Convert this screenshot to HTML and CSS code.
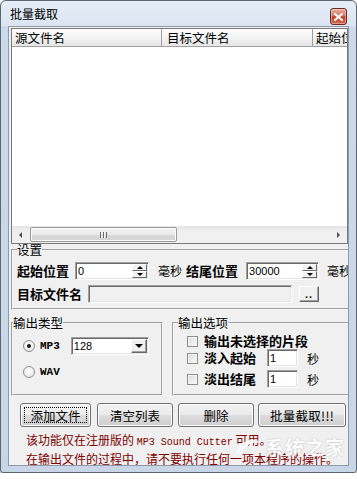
FILE: index.html
```html
<!DOCTYPE html>
<html lang="zh-CN">
<head>
  <meta charset="UTF-8" />
  <title>批量截取</title>
  <link rel="stylesheet" href="styles.css">
</head>
<body>
  <div class="window">
    <div class="titlebar">
      <span class="title">批量截取</span>
      <span class="close-btn">
        <svg width="9" height="8" viewBox="0 0 9 8"><path d="M1 1 L8 7 M8 1 L1 7" stroke="#fff" stroke-width="2" stroke-linecap="square"/></svg>
      </span>
    </div>

    <div class="client">
      <!-- file list -->
      <div class="listview">
        <div class="lv-header">
          <div class="lv-col col-src">源文件名</div>
          <div class="lv-col col-dst">目标文件名</div>
          <div class="lv-col col-start">起始位置</div>
        </div>
        <div class="lv-body"></div>
        <div class="hscroll">
          <div class="sb-btn"><span class="tri-left"></span></div>
          <div class="sb-track">
            <div class="sb-thumb"><span class="grip"></span></div>
          </div>
          <div class="sb-btn"><span class="tri-right"></span></div>
        </div>
      </div>

      <!-- settings -->
      <fieldset class="group settings">
        <legend>设置</legend>
        <div class="row">
          <span class="lbl">起始位置</span>
          <div class="spin sunken start-spin">
            <span class="field-val">0</span>
            <span class="spin-btns"><span class="spin-up"></span><span class="spin-down"></span></span>
          </div>
          <span class="unit ms">毫秒</span>
          <span class="lbl lbl-end">结尾位置</span>
          <div class="spin sunken end-spin">
            <span class="field-val">30000</span>
            <span class="spin-btns"><span class="spin-up"></span><span class="spin-down"></span></span>
          </div>
          <span class="unit ms2">毫秒</span>
        </div>
        <div class="row">
          <span class="lbl">目标文件名</span>
          <div class="sunken disabled target"></div>
          <div class="raised browse">..</div>
        </div>
      </fieldset>

      <div class="output-row">
        <fieldset class="group out-type">
          <legend>输出类型</legend>
          <div class="opt-row">
            <span class="radio checked"></span>
            <span class="fmt">MP3</span>
            <div class="combo sunken">
              <span class="field-val">128</span>
              <span class="drop raised"><i></i></span>
            </div>
          </div>
          <div class="opt-row wav">
            <span class="radio"></span>
            <span class="fmt">WAV</span>
          </div>
        </fieldset>

        <fieldset class="group out-opts">
          <legend>输出选项</legend>
          <div class="chk-row first">
            <span class="check"></span><span class="lbl">输出未选择的片段</span>
          </div>
          <div class="chk-row second">
            <span class="check"></span><span class="lbl">淡入起始</span>
            <div class="sunken num"><span class="field-val">1</span></div>
            <span class="unit sec">秒</span>
          </div>
          <div class="chk-row third">
            <span class="check"></span><span class="lbl">淡出结尾</span>
            <div class="sunken num"><span class="field-val">1</span></div>
            <span class="unit sec">秒</span>
          </div>
        </fieldset>
      </div>

      <div class="buttons">
        <div class="btn btn-add focused">添加文件</div>
        <div class="btn btn-clear">清空列表</div>
        <div class="btn btn-del">删除</div>
        <div class="btn btn-run">批量截取!!!</div>
      </div>

      <div class="notice">
        <div>该功能仅在注册版的 <span class="mono">MP3 Sound Cutter</span> 可用。</div>
        <div>在输出文件的过程中，请不要执行任何一项本程序的操作。</div>
      </div>
    </div>

    <!-- site watermark over the dialog -->
    <div class="watermark">
      <svg width="30" height="24" viewBox="0 0 30 24"><path d="M3 18 C8 4, 22 2, 28 8 C20 6, 12 9, 7 20 Z" fill="#fff"/></svg>
      <span>系统之家</span>
    </div>
  </div>
</body>
</html>
```

FILE: styles.css
```css
* {
  box-sizing: border-box;
}
body {
  margin: 0;
  background: #fff;
  font-family: "Noto Sans CJK SC", sans-serif;
  font-size: 12px;
  color: #000;
}
/* Window frame */
.window {
  position: relative;
  width: 357px;
  height: 473px;
  padding: 0 7px 6px;
  border: 1px solid #5b6673;
  border-radius: 6px 6px 3px 3px;
  background: linear-gradient(#e6edf6, #dbe5f1 25px, #cbd9ea 26px, #c8d6e8);
  box-shadow: 0 2px 5px rgba(0, 0, 0, 0.5);
  display: flex;
  flex-direction: column;
}
.titlebar {
  height: 25px;
  display: flex;
  align-items: flex-start;
}
.title {
  margin: 5px 0 0 2px;
  font-size: 12px;
  line-height: 16px;
}
.close-btn {
  margin: 7px 2px 0 auto;
  width: 17px;
  height: 17px;
  border: 1px solid #6d2a22;
  border-radius: 3px;
  background: linear-gradient(#eab0a3, #d9735f 45%, #c4432c 52%, #d16a52);
  box-shadow: inset 0 0 0 1px rgba(255, 255, 255, 0.35);
  display: flex;
  align-items: center;
  justify-content: center;
}
.client {
  height: 440px;
  border: 1px solid #8e9aab;
  background: #f0f0f0;
  padding: 1px 0 0 2px;
  overflow: hidden;
}
/* List view */
.listview {
  width: 337px;
  height: 216px;
  border: 1px solid #7a7a7a;
  background: #fff;
  display: flex;
  flex-direction: column;
}
.lv-header {
  display: flex;
  height: 18px;
  border-bottom: 1px solid #a0a0a0;
  background: linear-gradient(#fdfdfd, #f1f1f1 60%, #e6e6e6);
}
.lv-col {
  border-right: 1px solid #a0a0a0;
  padding-left: 3px;
  font-size: 12.5px;
  line-height: 17px;
  white-space: nowrap;
  overflow: hidden;
}
.col-src {
  width: 150px;
}
.col-dst {
  width: 151px;
  padding-left: 5px;
}
.col-start {
  flex: 1;
  border-right: 0;
}
.lv-body {
  flex: 1;
}
.hscroll {
  height: 17px;
  display: flex;
  background: linear-gradient(#e4e4e4, #efefef 30%, #f0f0f0);
}
.sb-btn {
  width: 17px;
  display: flex;
  align-items: center;
  justify-content: center;
}
.tri-left {
  border-top: 3px solid transparent;
  border-bottom: 3px solid transparent;
  border-right: 3px solid #505050;
}
.tri-right {
  border-top: 3px solid transparent;
  border-bottom: 3px solid transparent;
  border-left: 3px solid #505050;
}
.sb-track {
  flex: 1;
  padding: 1px 0 1px 1px;
}
.sb-thumb {
  width: 147px;
  height: 100%;
  border: 1px solid #9a9a9a;
  border-radius: 2px;
  background: linear-gradient(#f5f5f5, #e8e8e8 50%, #d9d9d9 51%, #d3d3d3);
  box-shadow: inset 0 0 0 1px #fbfbfb;
  display: flex;
  align-items: center;
  justify-content: center;
}
.grip {
  width: 7px;
  height: 6px;
  background: repeating-linear-gradient(90deg, #6a6a6a 0 1px, #f4f4f4 1px 2px, transparent 2px 3px);
}
/* Group boxes */
.group {
  margin: 0;
  padding: 0;
  border: 2px groove #f4f4f4;
  min-width: 0;
  flex-shrink: 0;
}
.group legend {
  padding: 0;
  font-size: 12.5px;
  line-height: 14px;
}
.settings {
  width: 345px;
  padding: 5px 0 5px 4px;
}
.settings legend {
  line-height: 12px;
}
.row {
  display: flex;
  align-items: center;
  height: 19px;
}
.row + .row {
  margin-top: 4px;
}
.lbl {
  font-weight: bold;
  font-size: 13px;
  line-height: 16px;
  white-space: nowrap;
}
.unit {
  font-size: 12px;
  white-space: nowrap;
}
/* Classic 3D borders */
.sunken {
  background: #fff;
  border: 1px solid;
  border-color: #a0a0a0 #fff #fff #a0a0a0;
  box-shadow: inset 1px 1px 0 #696969, inset -1px -1px 0 #e3e3e3;
  padding: 1px;
}
.raised {
  background: #f0f0f0;
  border: 1px solid;
  border-color: #fff #696969 #696969 #fff;
  box-shadow: inset -1px -1px 0 #a0a0a0;
}
.field-val {
  flex: 1;
  padding-left: 1px;
  font-family: "Liberation Sans", sans-serif;
  font-size: 11px;
  line-height: 14px;
}
.spin {
  display: flex;
  height: 18px;
}
.start-spin {
  width: 74px;
  margin-left: 6px;
}
.end-spin {
  width: 73px;
  margin-left: 8px;
}
.spin-btns {
  width: 15px;
  display: flex;
  flex-direction: column;
}
.spin-btns span {
  flex: 1;
  background: #f0f0f0;
  border: 1px solid;
  border-color: #fff #696969 #696969 #fff;
  display: flex;
  align-items: center;
  justify-content: center;
}
.spin-up::before {
  content: "";
  border-left: 3px solid transparent;
  border-right: 3px solid transparent;
  border-bottom: 3px solid #000;
}
.spin-down::before {
  content: "";
  border-left: 3px solid transparent;
  border-right: 3px solid transparent;
  border-top: 3px solid #000;
}
.ms {
  margin-left: 9px;
}
.lbl-end {
  margin-left: 4px;
}
.ms2 {
  margin-left: 8px;
}
.target {
  width: 204px;
  height: 18px;
  margin-left: 6px;
}
.disabled {
  background: #f0f0f0;
}
.browse {
  width: 20px;
  height: 16px;
  margin-left: 7px;
  font-family: "Liberation Sans", sans-serif;
  font-size: 11px;
  font-weight: bold;
  line-height: 14px;
  text-align: center;
  letter-spacing: 1px;
}
/* Output options */
.output-row {
  display: flex;
  margin-top: 6px;
  height: 80px;
}
.out-type {
  width: 152px;
  padding: 7px 0 0 10px;
}
.out-type legend {
  margin-left: -10px;
}
.out-opts {
  width: 185px;
  margin-left: 9px;
  padding: 4px 0 0 13px;
}
.out-opts legend {
  margin-left: -9px;
}
.opt-row {
  display: flex;
  align-items: center;
  height: 18px;
}
.opt-row.wav {
  margin-top: 8px;
}
.radio {
  position: relative;
  width: 12px;
  height: 12px;
  border-radius: 50%;
  border: 1px solid #8e8f8f;
  background: radial-gradient(circle at 50% 40%, #fff, #e2e2e2);
}
.radio.checked::after {
  content: "";
  position: absolute;
  left: 3px;
  top: 3px;
  width: 4px;
  height: 4px;
  border-radius: 50%;
  background: #1a1a1a;
}
.fmt {
  margin-left: 5px;
  font-family: "Liberation Mono", monospace;
  font-size: 11px;
  font-weight: bold;
}
.combo {
  display: flex;
  width: 78px;
  height: 18px;
  margin-left: 11px;
}
.drop {
  width: 16px;
  display: flex;
  align-items: center;
  justify-content: center;
}
.drop i {
  border-left: 4px solid transparent;
  border-right: 4px solid transparent;
  border-top: 4px solid #000;
}
.chk-row {
  display: flex;
  align-items: center;
  height: 18px;
}
.chk-row.first {
  height: 14px;
}
.chk-row.second {
  margin-top: 1px;
}
.chk-row.third {
  margin-top: 3px;
}
.check {
  width: 11px;
  height: 11px;
  margin-right: 6px;
  border: 1px solid #8e8f8f;
  background: linear-gradient(135deg, #dcdcdc, #fbfbfb);
  box-shadow: inset 0 0 0 1px #f2f2f2;
}
.num {
  display: flex;
  width: 31px;
  height: 18px;
  margin-left: 11px;
}
.sec {
  margin-left: 9px;
}
/* Buttons */
.buttons {
  display: flex;
  height: 24px;
  margin-top: 7px;
  padding-left: 9px;
}
.btn {
  position: relative;
  height: 24px;
  border: 1px solid #707070;
  border-radius: 3px;
  background: linear-gradient(#f2f2f2, #ebebeb 50%, #dddddd 51%, #cfcfcf);
  box-shadow: inset 0 0 0 1px #fcfcfc;
  display: flex;
  align-items: center;
  justify-content: center;
  font-size: 12.5px;
  white-space: nowrap;
}
.btn.focused::after {
  content: "";
  position: absolute;
  inset: 3px;
  border: 1px dotted #000;
}
.btn-add {
  width: 71px;
}
.btn-clear {
  width: 76px;
  margin-left: 6px;
}
.btn-del {
  width: 76px;
  margin-left: 5px;
}
.btn-run {
  width: 88px;
  margin-left: 4px;
  letter-spacing: 0.3px;
}
/* Notice text */
.notice {
  margin: 5px 0 0 15px;
  color: #800000;
  font-size: 12px;
  line-height: 16px;
  white-space: nowrap;
}
.mono {
  font-family: "Liberation Mono", monospace;
  font-size: 10px;
}
/* Watermark */
.watermark {
  position: absolute;
  left: 232px;
  top: 432px;
  display: flex;
  align-items: center;
  gap: 2px;
  color: #fff;
  opacity: 0.9;
  font-size: 19px;
  font-weight: bold;
  letter-spacing: 1px;
  text-shadow: 0 0 2px rgba(0, 0, 0, 0.25);
}
```
